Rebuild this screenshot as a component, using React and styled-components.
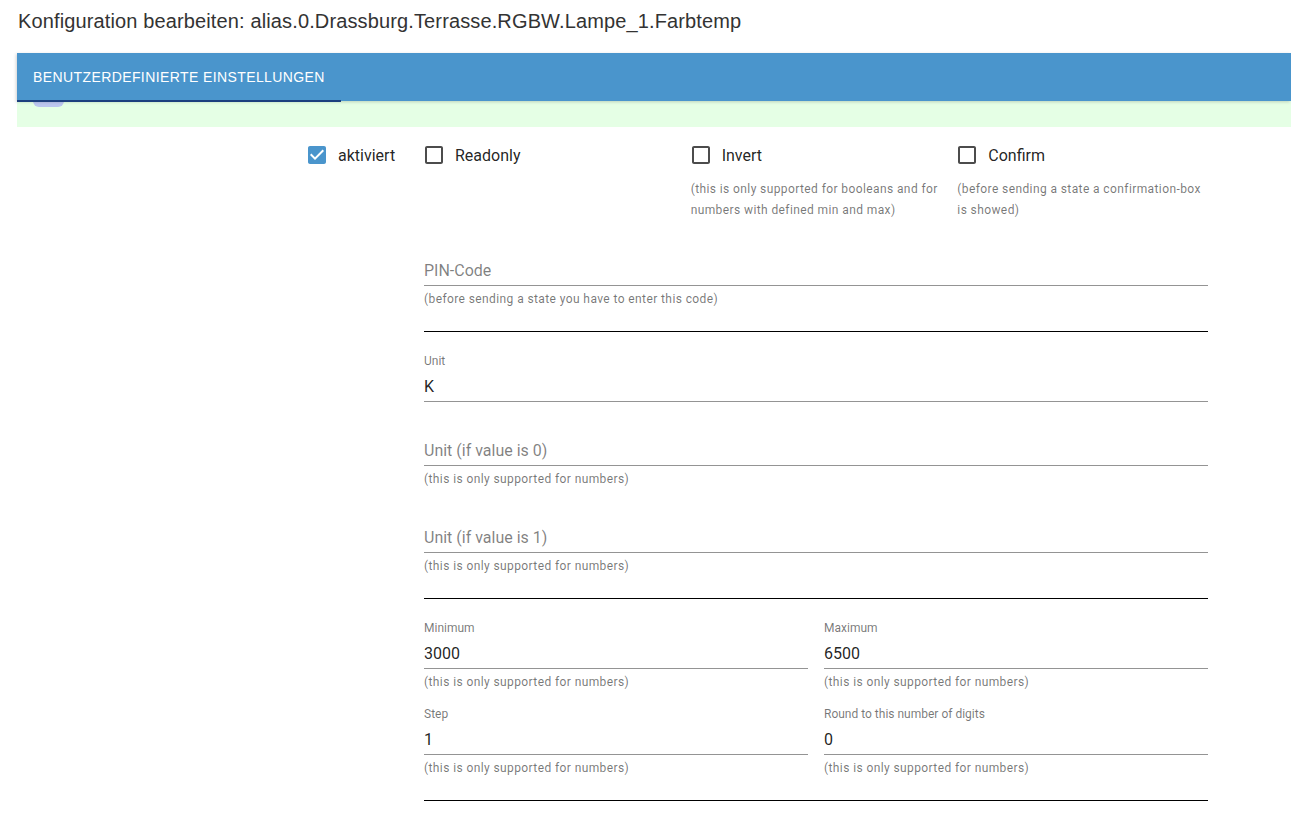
import React from 'react'
import styled, { createGlobalStyle } from 'styled-components'

const GlobalStyle = createGlobalStyle`
    html, body {
        margin: 0;
        padding: 0;
        background: #fff;
        font-family: Roboto, "Noto Sans", Arial, sans-serif;
    }
`

const CheckedIcon = () => (
    <svg width="24" height="24" viewBox="0 0 24 24">
        <path fill="#4a95cc" d="M19 3H5c-1.11 0-2 .9-2 2v14c0 1.1.89 2 2 2h14c1.11 0 2-.9 2-2V5c0-1.1-.89-2-2-2z" />
        <path fill="#fff" d="M10 17l-5-5 1.41-1.41L10 14.17l7.59-7.59L19 8l-9 9z" />
    </svg>
)

const UncheckedIcon = () => (
    <svg width="24" height="24" viewBox="0 0 24 24">
        <path fill="rgba(0,0,0,0.7)" d="M19 5v14H5V5h14m0-2H5c-1.1 0-2 .9-2 2v14c0 1.1.9 2 2 2h14c1.1 0 2-.9 2-2V5c0-1.1-.9-2-2-2z" />
    </svg>
)

function Check({ label, checked }) {
    return (
        <CheckLabel>
            <CheckBoxWrap>{checked ? <CheckedIcon /> : <UncheckedIcon />}</CheckBoxWrap>
            <CheckText>{label}</CheckText>
        </CheckLabel>
    )
}

function Field({ label, value, helper }) {
    const filled = value !== undefined && value !== ''
    return (
        <FieldBox>
            <FieldLabel>{filled ? label : ''}</FieldLabel>
            <InputRow $placeholder={!filled}>{filled ? value : label}</InputRow>
            {helper && <Helper>{helper}</Helper>}
        </FieldBox>
    )
}

const NUM_HELP = '(this is only supported for numbers)'

function App() {
    return (
        <>
        <GlobalStyle />
        <Title>Konfiguration bearbeiten: alias.0.Drassburg.Terrasse.RGBW.Lampe_1.Farbtemp</Title>
        <Panel>
            <TabBar>
                <Tab>Benutzerdefinierte Einstellungen</Tab>
            </TabBar>
            <Strip>
                <Blob />
            </Strip>
            <Body>
                <SideColumn>
                    <Check label="aktiviert" checked />
                </SideColumn>
                <MainColumn>
                    <CheckGrid>
                        <div>
                            <Check label="Readonly" />
                        </div>
                        <div>
                            <Check label="Invert" />
                            <CheckHelper>(this is only supported for booleans and for numbers with defined min and max)</CheckHelper>
                        </div>
                        <div>
                            <Check label="Confirm" />
                            <CheckHelper>(before sending a state a confirmation-box is showed)</CheckHelper>
                        </div>
                    </CheckGrid>

                    <Section $top={17}>
                        <Field label="PIN-Code" helper="(before sending a state you have to enter this code)" />
                    </Section>
                    <Divider />

                    <Section $top={22}>
                        <Field label="Unit" value="K" />
                    </Section>
                    <Section $top={16}>
                        <Field label="Unit (if value is 0)" helper={NUM_HELP} />
                    </Section>
                    <Section $top={16}>
                        <Field label="Unit (if value is 1)" helper={NUM_HELP} />
                    </Section>
                    <Divider />

                    <PairRow $top={22}>
                        <Field label="Minimum" value="3000" helper={NUM_HELP} />
                        <Field label="Maximum" value="6500" helper={NUM_HELP} />
                    </PairRow>
                    <PairRow $top={15}>
                        <Field label="Step" value="1" helper={NUM_HELP} />
                        <Field label="Round to this number of digits" value="0" helper={NUM_HELP} />
                    </PairRow>
                    <Divider />
                </MainColumn>
            </Body>
        </Panel>
        </>
    )
}

export default App

const Title = styled.div`
    padding: 9px 18px 0;
    margin-bottom: 20px;
    font-family: "Liberation Sans", Arial, sans-serif;
    font-size: 20px;
    letter-spacing: 0.13px;
    line-height: 24px;
    color: #333;
`

const Panel = styled.div`
    margin-left: 17px;
`

const TabBar = styled.div`
    position: relative;
    z-index: 1;
    display: flex;
    height: 48px;
    background: #4a95cc;
    box-shadow: -1px 1px 3px 0 rgba(0,0,0,0.18);
`

const Tab = styled.div`
    display: flex;
    align-items: center;
    padding: 0 16px 0 16px;
    width: 324px;
    box-sizing: border-box;
    color: #fff;
    font-family: "Liberation Sans", Arial, sans-serif;
    font-size: 14px;
    letter-spacing: 0.4px;
    text-transform: uppercase;
    border-bottom: 2px solid #1c3f7e;
    margin-bottom: -1px;
`

const Strip = styled.div`
    height: 26px;
    background: #e5ffe5;
`

const Blob = styled.div`
    width: 31px;
    height: 6px;
    margin-left: 16px;
    border-radius: 0 0 6px 6px;
    background: #bcc6ef;
`

const Body = styled.div`
    display: grid;
    grid-template-columns: 117px 784px;
    padding: 7px 0 40px 290px;
`

const SideColumn = styled.div``

const MainColumn = styled.div`
    display: flex;
    flex-direction: column;
`

const CheckGrid = styled.div`
    display: grid;
    grid-template-columns: repeat(3, 250.67px);
    column-gap: 16px;
`

const CheckLabel = styled.label`
    display: inline-flex;
    align-items: center;
    margin-left: -11px;
    height: 42px;
`

const CheckBoxWrap = styled.span`
    display: flex;
    padding: 9px;
`

const CheckText = styled.span`
    font-size: 16px;
    color: rgba(0,0,0,0.87);
`

const CheckHelper = styled.div`
    margin-top: 3px;
    font-size: 12px;
    line-height: 21px;
    letter-spacing: 0.4px;
    color: rgba(0,0,0,0.54);
`

const Section = styled.div`
    margin-top: ${p => p.$top}px;
`

const PairRow = styled.div`
    margin-top: ${p => p.$top}px;
    display: grid;
    grid-template-columns: 1fr 1fr;
    column-gap: 16px;
`

const FieldBox = styled.div`
    display: flex;
    flex-direction: column;
`

const FieldLabel = styled.div`
    height: 14px;
    font-size: 12px;
    line-height: 14px;
    color: rgba(0,0,0,0.54);
    margin-bottom: 5px;
`

const InputRow = styled.div`
    height: 19px;
    padding: 4px 0 5px;
    font-size: 16px;
    line-height: 19px;
    color: ${p => p.$placeholder ? 'rgba(0,0,0,0.5)' : 'rgba(0,0,0,0.87)'};
    border-bottom: 1px solid rgba(0,0,0,0.42);
`

const Helper = styled.div`
    margin-top: 3px;
    font-size: 12px;
    line-height: 20px;
    letter-spacing: 0.4px;
    color: rgba(0,0,0,0.54);
`

const Divider = styled.div`
    margin-top: 22px;
    height: 1px;
    background: #000;
`
